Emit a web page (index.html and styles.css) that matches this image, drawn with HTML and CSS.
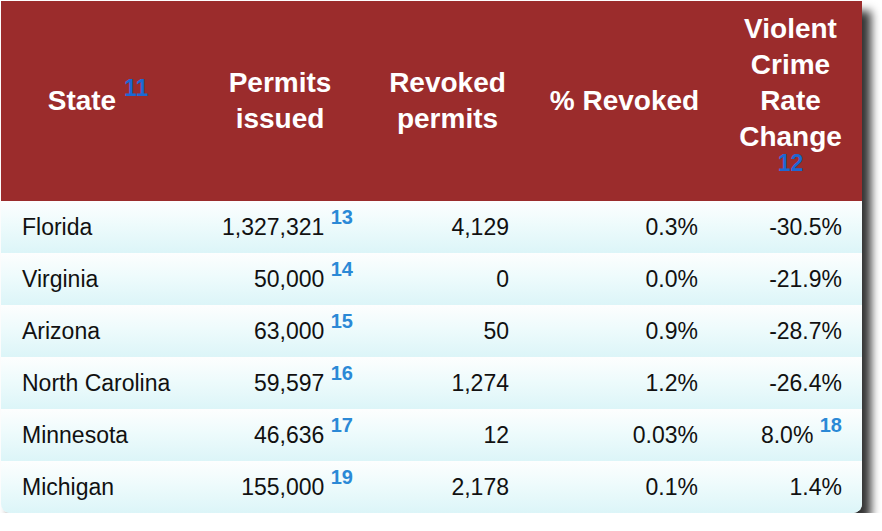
FILE: index.html
```html
<!DOCTYPE html>
<html>
<head>
<meta charset="utf-8">
<link rel="stylesheet" href="styles.css">
</head>
<body>
<div class="card">
<table class="data">
  <colgroup>
    <col class="c1"><col class="c2"><col class="c3"><col class="c4"><col class="c5">
  </colgroup>
  <thead>
    <tr>
      <th>State <span class="href">11</span></th>
      <th>Permits issued</th>
      <th>Revoked permits</th>
      <th>% Revoked</th>
      <th>Violent Crime Rate Change <span class="href href-block">12</span></th>
    </tr>
  </thead>
  <tbody>
    <tr><td class="name">Florida</td><td class="num permits">1,327,321 <span class="ref">13</span></td><td class="num">4,129</td><td class="num">0.3%</td><td class="num">-30.5%</td></tr>
    <tr><td class="name">Virginia</td><td class="num permits">50,000 <span class="ref">14</span></td><td class="num">0</td><td class="num">0.0%</td><td class="num">-21.9%</td></tr>
    <tr><td class="name">Arizona</td><td class="num permits">63,000 <span class="ref">15</span></td><td class="num">50</td><td class="num">0.9%</td><td class="num">-28.7%</td></tr>
    <tr><td class="name">North Carolina</td><td class="num permits">59,597 <span class="ref">16</span></td><td class="num">1,274</td><td class="num">1.2%</td><td class="num">-26.4%</td></tr>
    <tr><td class="name">Minnesota</td><td class="num permits">46,636 <span class="ref">17</span></td><td class="num">12</td><td class="num">0.03%</td><td class="num">8.0% <span class="ref">18</span></td></tr>
    <tr><td class="name">Michigan</td><td class="num permits">155,000 <span class="ref">19</span></td><td class="num">2,178</td><td class="num">0.1%</td><td class="num">1.4%</td></tr>
  </tbody>
</table>
</div>
</body>
</html>
```
FILE: styles.css
```css
html, body {
  margin: 0;
  padding: 0;
  background: #ffffff;
}
body {
  padding: 1px 0 0 1px;
  font-family: "Liberation Sans", Arial, sans-serif;
}
.card {
  width: 861px;
  border-radius: 0 0 9px 9px;
  overflow: hidden;
  box-shadow: 9px 10px 10px rgba(0, 0, 0, 0.8);
}
.data {
  width: 861px;
  table-layout: fixed;
  border-collapse: collapse;
  border-spacing: 0;
}
.c1 { width: 194px; }
.c2 { width: 170px; }
.c3 { width: 165px; }
.c4 { width: 189px; }
.c5 { width: 143px; }
.data th {
  background: #9b2c2c;
  color: #ffffff;
  font-size: 28px;
  font-weight: bold;
  line-height: 36px;
  height: 200px;
  padding: 0 6px;
  text-align: center;
  vertical-align: middle;
}
.href {
  color: #1c68d4;
  font-size: 23px;
  font-weight: 700;
  vertical-align: 14px;
  line-height: 0;
}
.href-block {
  display: block;
  line-height: 17px;
  padding-bottom: 20px;
  vertical-align: baseline;
}
.data td {
  height: 52px;
  padding: 0 20px 0 21px;
  font-size: 23px;
  color: #111111;
  vertical-align: middle;
  background: linear-gradient(to bottom, #fdfefe 0%, #eefbfc 45%, #dcf5f8 100%);
  white-space: nowrap;
}
.data td.num {
  text-align: right;
  padding-right: 21px;
}
.data td.permits {
  padding-right: 12px;
}
.data td:last-child {
  padding-right: 20px;
}
.ref {
  color: #2b89d6;
  font-size: 20px;
  font-weight: bold;
  vertical-align: 11px;
  line-height: 0;
}
```
